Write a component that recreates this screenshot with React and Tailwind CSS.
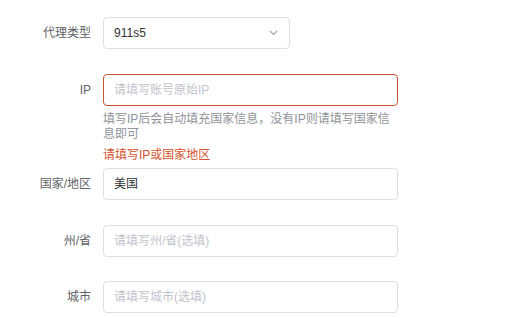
import React from 'react';

const font = { fontFamily: '"Liberation Sans", "Noto Sans CJK SC", sans-serif' };

const Label = ({ children }) => (
  <div className="w-[103px] shrink-0 pr-3 text-right text-[12px] text-[#606266]">{children}</div>
);

const TextInput = ({ value, placeholder, error }) => (
  <div
    className={`flex h-8 w-[295px] items-center rounded border px-[10px] text-[12px] ${
      error ? 'border-[#c9522f]' : 'border-[#dcdfe6]'
    }`}
  >
    {value ? (
      <span className="text-[#303133]">{value}</span>
    ) : (
      <span className="text-[#c0c4cc]">{placeholder}</span>
    )}
  </div>
);

export default function App() {
  return (
    <div className="h-[318px] w-[508px] bg-white pt-[17px]" style={font}>
      <div className="flex items-center">
        <Label>代理类型</Label>
        <div className="flex h-8 w-[187px] items-center justify-between rounded border border-[#dcdfe6] pl-[10px] pr-[11px] text-[12px] text-[#303133]">
          <span>911s5</span>
          <svg width="9" height="6" viewBox="0 0 9 6" fill="none">
            <path d="M1 1l3.5 3.5L8 1" stroke="#a0a4ab" strokeWidth="1.2" />
          </svg>
        </div>
      </div>

      <div className="mt-[25px] flex items-center">
        <Label>IP</Label>
        <TextInput placeholder="请填写账号原始IP" error />
      </div>
      <div className="ml-[103px] w-[295px]">
        <div className="mt-[6px] text-[12px] leading-[15px] text-[#909399]">
          填写IP后会自动填充国家信息，没有IP则请填写国家信息即可
        </div>
        <div className="mt-[6px] text-[12px] leading-[15px] text-[#d6532d]">请填写IP或国家地区</div>
      </div>

      <div className="mt-[5px] flex items-center">
        <Label>国家/地区</Label>
        <TextInput value="美国" />
      </div>

      <div className="mt-[25px] flex items-center">
        <Label>州/省</Label>
        <TextInput placeholder="请填写州/省(选填)" />
      </div>

      <div className="mt-[24px] flex items-center">
        <Label>城市</Label>
        <TextInput placeholder="请填写城市(选填)" />
      </div>
    </div>
  );
}
